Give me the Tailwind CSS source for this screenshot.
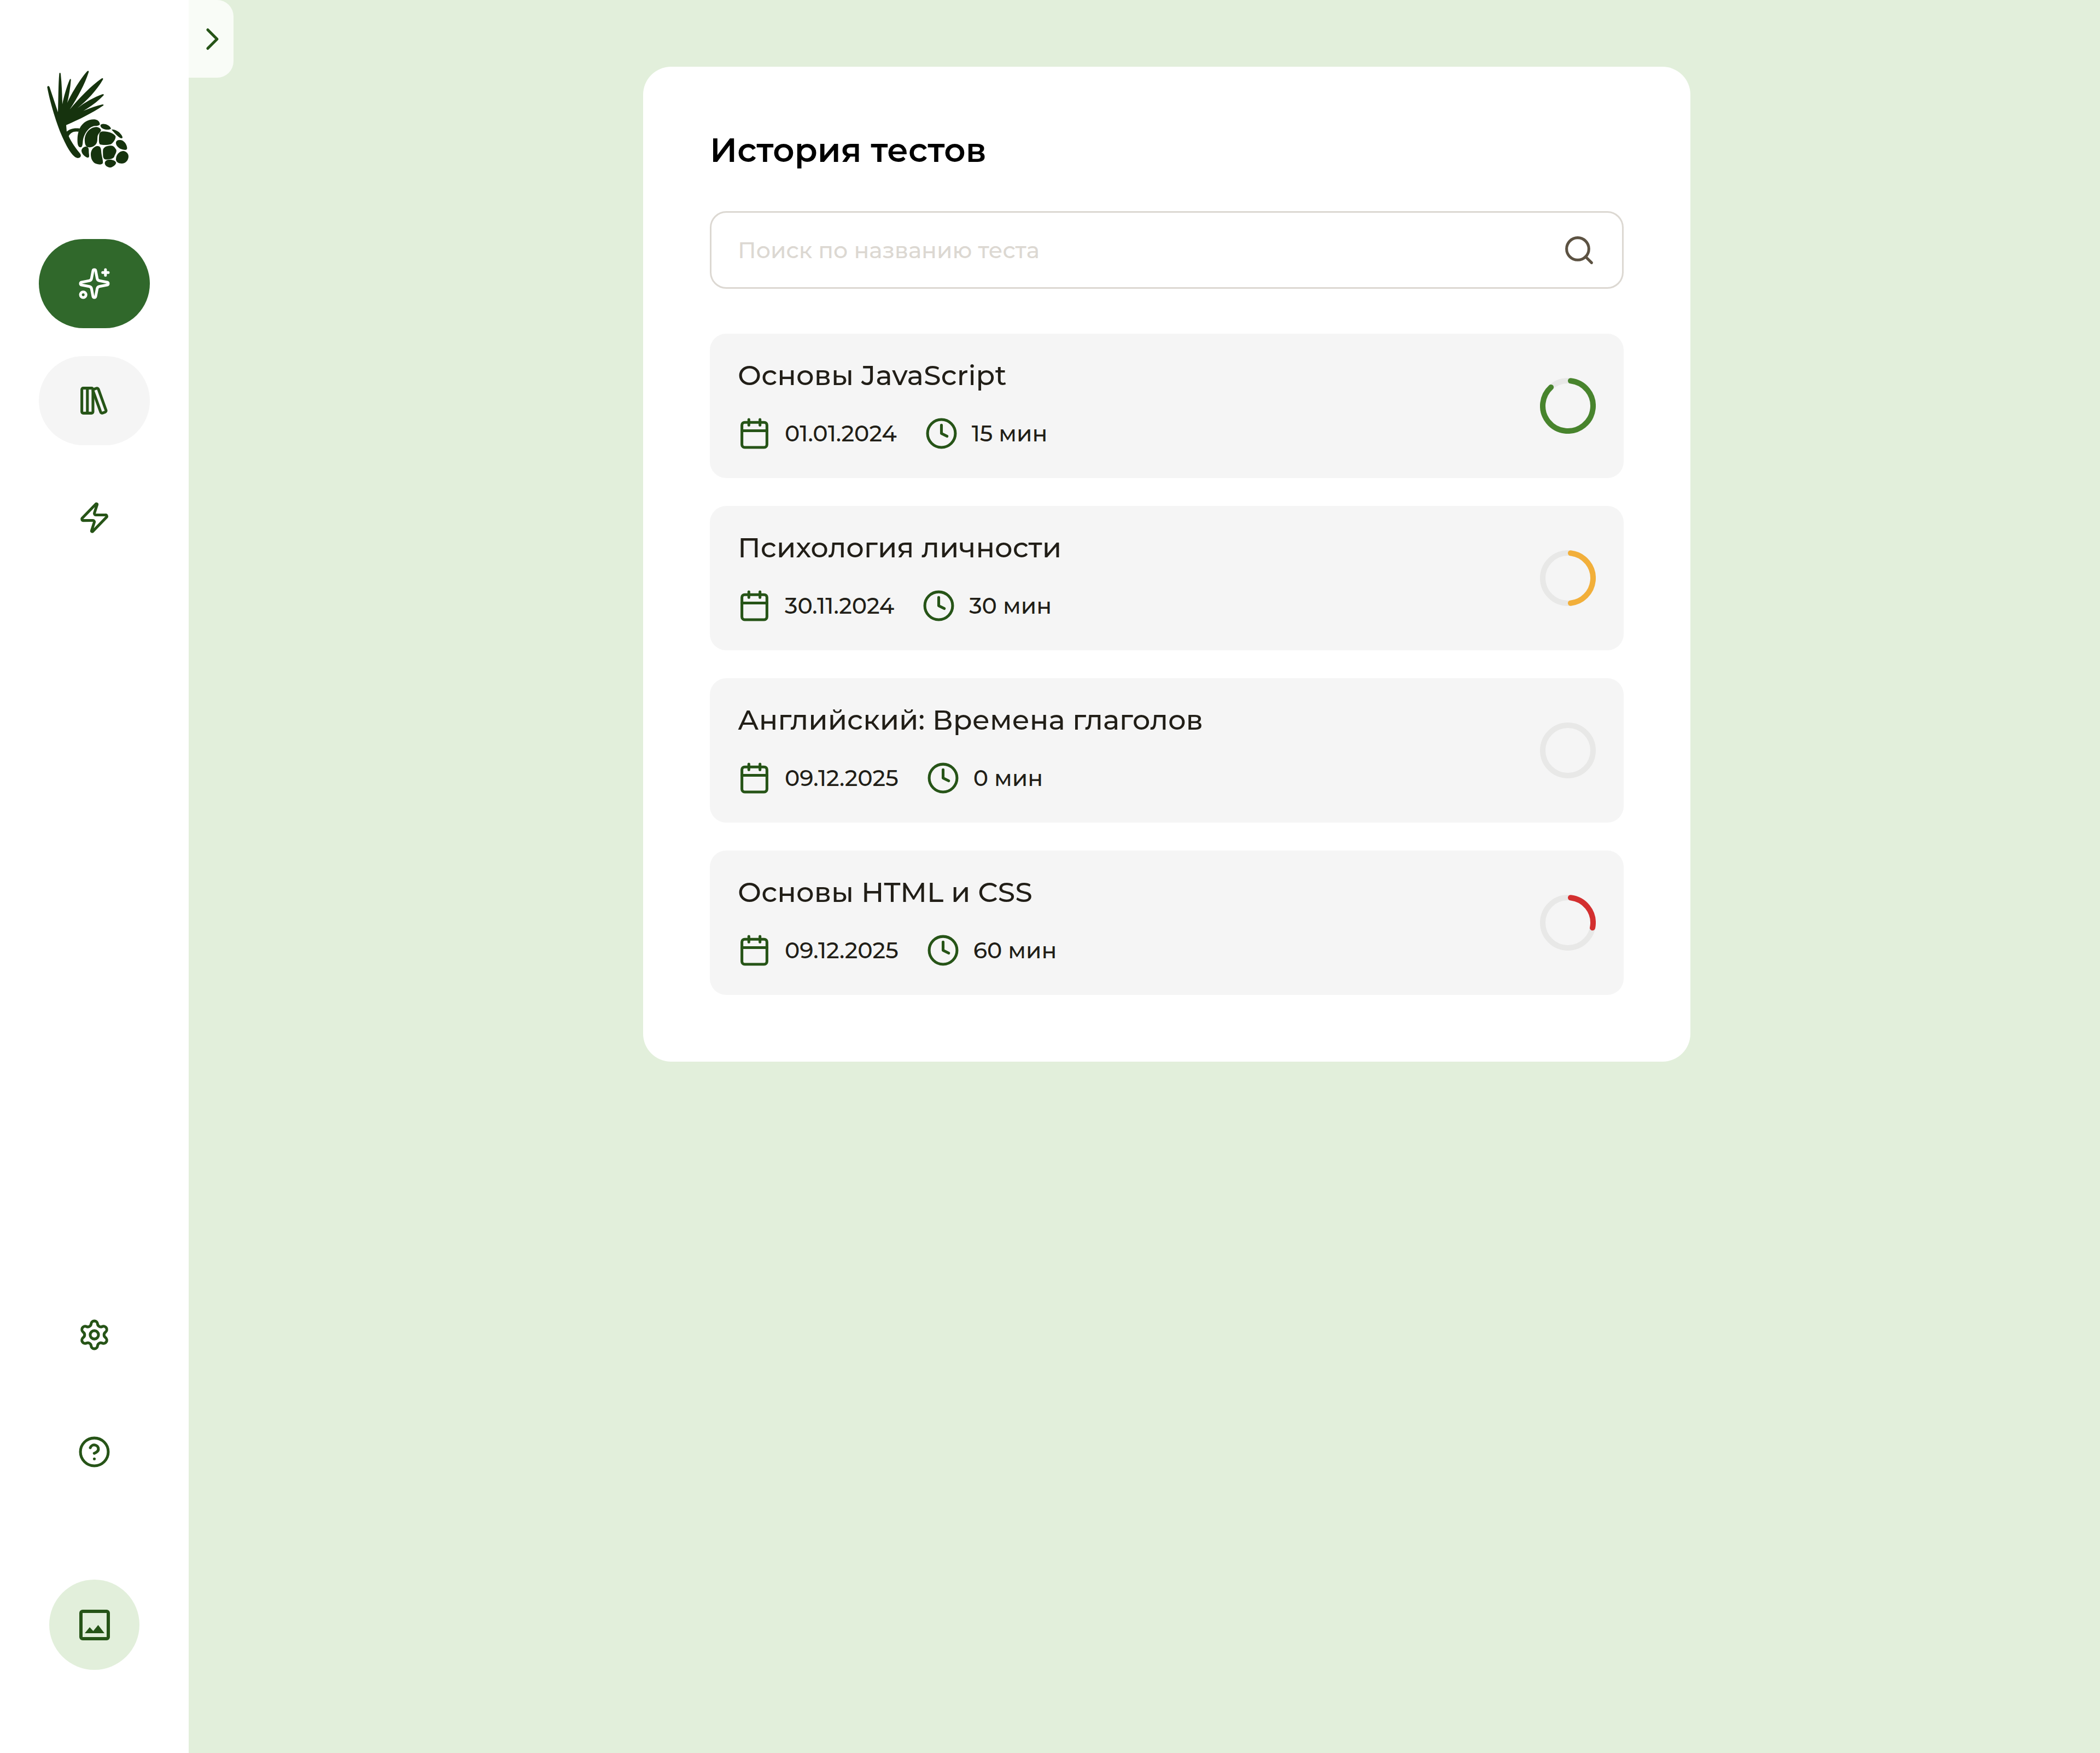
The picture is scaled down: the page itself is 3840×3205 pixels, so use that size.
<!DOCTYPE html>
<html lang="ru">

<head>
	<meta charset="UTF-8">
	<meta name="viewport" content="width=device-width, initial-scale=1.0">
	<title>История тестов</title>
	<script src="https://cdn.jsdelivr.net/npm/@tailwindcss/browser@4"></script>
</head>

<body class="flex min-h-screen bg-[#e2efdb] font-['Montserrat','Inter',sans-serif] text-[#211e17]">
	<!-- shared icons -->
	<svg class="hidden" xmlns="http://www.w3.org/2000/svg">
		<symbol id="calendar" viewBox="0 0 24 24">
			<path d="M8 2v4M16 2v4M3 10h18" />
			<rect x="3" y="4" width="18" height="18" rx="2" />
		</symbol>
		<symbol id="clock" viewBox="0 0 24 24">
			<circle cx="12" cy="12" r="10" />
			<path d="M12 6v6l4 2" />
		</symbol>
	</svg>

	<!-- sidebar -->
	<aside class="flex w-[345px] shrink-0 flex-col items-center bg-white pt-[110px] pb-[152px] text-[#265417]">
		<a href="#" aria-label="Главная">
			<svg class="h-[220px] w-[200px] fill-[#16330e]" viewBox="38 0 600 660">
				<!-- needles and twig -->
				<path d="M78 148C80 140 88 140 91 148L137 286C139 220 139 130 144 76C145 67 151 67 152 76C158 130 160 190 161 242C168 205 183 150 201 107C204 100 209 101 208 110C205 150 197 195 188 234C215 175 262 100 296 62C302 55 308 58 305 67C285 130 245 205 202 270C255 205 320 140 375 101C382 96 387 100 383 107C350 165 295 222 243 264C285 231 335 204 381 187C388 185 391 189 386 194C335 248 262 288 191 325C245 287 320 258 380 243C387 242 390 246 384 250C325 290 255 325 182 356L185 392C200 378 225 370 257 375L249 393C225 388 205 398 196 417C210 450 240 490 259 513C270 530 253 541 238 535C205 520 172 446 154 405C125 335 92 225 78 148Z" />
				<!-- cone scales -->
				<path d="M256 374C275 335 315 320 345 326C357 328 367 340 367 352C363 360 350 361 340 361C305 364 280 405 274 440C272 455 273 478 260 478C246 477 243 455 244 430C245 405 250 390 256 374Z" />
				<path d="M284 446C280 405 310 369 345 367C358 366 374 375 373 386C370 396 356 402 354 420C352 440 354 448 346 460C335 475 318 480 304 478C290 475 285 462 284 446Z" />
				<path d="M370 358C372 349 385 348 397 351C413 355 426 366 428 376C424 382 408 382 397 380C384 378 370 370 370 358Z" />
				<path d="M431 381C440 378 458 385 470 394C482 404 492 418 491 426C487 432 477 426 468 419C456 410 442 393 431 381Z" />
				<path d="M363 412C364 396 372 391 387 391C410 390 447 402 453 418C455 432 441 453 427 461C410 466 382 466 370 463C360 460 361 435 363 412Z" />
				<path d="M455 452C457 437 472 436 485 439C502 443 518 468 516 486C513 495 497 493 482 487C467 480 454 466 455 452Z" />
				<path d="M266 494C271 477 288 471 298 476C309 482 305 498 307 513C309 527 309 533 301 535C285 532 264 510 266 494Z" />
				<path d="M317 517C317 493 332 474 352 471C367 470 373 480 374 497C375 524 386 548 383 565C378 575 360 573 345 568C327 561 317 540 317 517Z" />
				<path d="M384 492C387 477 405 470 423 469C441 467 447 477 456 490C462 503 449 518 446 529C442 542 420 544 400 545C389 544 384 536 384 520C384 510 383 502 384 492Z" />
				<path d="M455 544C455 518 475 499 494 498C511 499 524 512 524 529C523 549 509 567 486 567C471 567 455 560 455 544Z" />
				<path d="M394 563C396 547 413 545 424 546C438 546 455 553 456 564C452 577 435 589 420 589C405 585 393 576 394 563Z" />
			</svg>
		</a>

		<nav class="mt-[107px] flex flex-col gap-[51px]">
			<a href="#" aria-label="Создать тест" class="flex h-[163px] w-[203px] items-center justify-center rounded-full bg-[#30682b] text-white">
				<svg class="size-[61px] fill-none stroke-current stroke-2" viewBox="0 0 24 24" stroke-linecap="round" stroke-linejoin="round">
					<path d="M11.017 2.814a1 1 0 0 1 1.966 0l1.051 5.558a2 2 0 0 0 1.594 1.594l5.558 1.051a1 1 0 0 1 0 1.966l-5.558 1.051a2 2 0 0 0-1.594 1.594l-1.051 5.558a1 1 0 0 1-1.966 0l-1.051-5.558a2 2 0 0 0-1.594-1.594l-5.558-1.051a1 1 0 0 1 0-1.966l5.558-1.051a2 2 0 0 0 1.594-1.594zM20 2v4M22 4h-4" />
					<circle cx="4" cy="20" r="2" />
				</svg>
			</a>
			<a href="#" aria-label="История тестов" aria-current="page" class="flex h-[163px] w-[203px] items-center justify-center rounded-full bg-[#f5f5f5]">
				<svg class="size-[61px] fill-none stroke-current stroke-2" viewBox="0 0 24 24" stroke-linecap="round" stroke-linejoin="round">
					<rect x="3" y="3" width="8" height="18" rx="1" />
					<path d="M7 3v18M20.4 18.9c.2.5-.1 1.1-.6 1.3l-1.9.7c-.5.2-1.1-.1-1.3-.6L11.1 5.1c-.2-.5.1-1.1.6-1.3l1.9-.7c.5-.2 1.1.1 1.3.6Z" />
				</svg>
			</a>
			<a href="#" aria-label="Быстрый тест" class="flex h-[163px] w-[203px] items-center justify-center rounded-full">
				<svg class="size-[61px] fill-none stroke-current stroke-2" viewBox="0 0 24 24" stroke-linecap="round" stroke-linejoin="round">
					<path d="M4 14a1 1 0 0 1-.78-1.63l9.9-10.2a.5.5 0 0 1 .86.46l-1.92 6.02A1 1 0 0 0 13 10h7a1 1 0 0 1 .78 1.63l-9.9 10.2a.5.5 0 0 1-.86-.46l1.92-6.02A1 1 0 0 0 11 14z" />
				</svg>
			</a>
		</nav>

		<div class="mt-auto flex flex-col items-center gap-[51px]">
			<a href="#" aria-label="Настройки" class="flex h-[163px] w-[203px] items-center justify-center rounded-full">
				<svg class="size-[61px] fill-none stroke-current stroke-2" viewBox="0 0 24 24" stroke-linecap="round" stroke-linejoin="round">
					<path d="M9.671 4.136a2.34 2.34 0 0 1 4.659 0 2.34 2.34 0 0 0 3.319 1.915 2.34 2.34 0 0 1 2.33 4.033 2.34 2.34 0 0 0 0 3.831 2.34 2.34 0 0 1-2.33 4.033 2.34 2.34 0 0 0-3.319 1.915 2.34 2.34 0 0 1-4.659 0 2.34 2.34 0 0 0-3.32-1.915 2.34 2.34 0 0 1-2.33-4.033 2.34 2.34 0 0 0 0-3.831A2.34 2.34 0 0 1 6.35 6.051a2.34 2.34 0 0 0 3.319-1.915" />
					<circle cx="12" cy="12" r="3" />
				</svg>
			</a>
			<a href="#" aria-label="Помощь" class="flex h-[163px] w-[203px] items-center justify-center rounded-full">
				<svg class="size-[61px] fill-none stroke-current stroke-2" viewBox="0 0 24 24" stroke-linecap="round" stroke-linejoin="round">
					<circle cx="12" cy="12" r="10" />
					<path d="M9.09 9a3 3 0 0 1 5.83 1c0 2-3 3-3 3M12 17h.01" />
				</svg>
			</a>
		</div>

		<button type="button" aria-label="Профиль" class="mt-[152px] flex size-[165px] items-center justify-center rounded-full bg-[#e2efdb]">
			<svg class="size-14" viewBox="0 0 56 56">
				<rect x="3" y="3" width="50" height="50" rx="3" fill="none" stroke="currentColor" stroke-width="6" />
				<path d="M10 43L19 32L25.500 39L34.500 28L46 43Z" fill="currentColor" />
			</svg>
		</button>
	</aside>

	<button type="button" aria-label="Развернуть меню" class="flex h-[142px] w-[82px] shrink-0 items-center justify-center rounded-r-[30px] bg-[#f9fcf7] text-[#265417]">
		<svg class="size-[61px] fill-none stroke-current stroke-2" viewBox="0 0 24 24" stroke-linecap="round" stroke-linejoin="round">
			<path d="M9.400 5.300L16.100 12L9.400 18.700" />
		</svg>
	</button>

	<!-- content -->
	<main class="flex grow items-start justify-center py-[122px]">
		<section class="w-full max-w-[1915px] rounded-[51px] bg-white p-[122px]">
			<h1 class="text-[61px] leading-[61px] font-semibold text-black">История тестов</h1>

			<form class="mt-[81px] flex h-[142px] items-center rounded-[30px] border-3 border-[#dcd8d2] px-12">
				<input type="search" aria-label="Поиск по названию теста" placeholder="Поиск по названию теста"
					class="h-full grow text-[41px] font-medium outline-none placeholder:text-[#dcd8d2]">
				<button type="submit" aria-label="Найти" class="text-[#5c5242]">
					<svg class="size-[61px] fill-none stroke-current stroke-2" viewBox="0 0 24 24" stroke-linecap="round">
						<circle cx="11" cy="11" r="8" />
						<path d="M21 21l-4.300-4.300" />
					</svg>
				</button>
			</form>

			<ul class="mt-[82px] flex flex-col gap-[51px]">
				<li class="flex items-center justify-between rounded-[30px] bg-[#f5f5f5] p-[51px]">
					<div class="flex flex-col gap-[50px]">
						<h2 class="text-[51px] leading-[51px] font-medium">Основы JavaScript</h2>
						<div class="flex gap-[51px] text-[41px] leading-[61px] font-medium">
							<span class="flex gap-[25px]"><svg class="size-[61px] fill-none stroke-[#265417] stroke-2" stroke-linecap="round" stroke-linejoin="round"><use href="#calendar" /></svg>01.01.2024</span>
							<span class="flex gap-[25px]"><svg class="size-[61px] fill-none stroke-[#265417] stroke-2" stroke-linecap="round" stroke-linejoin="round"><use href="#clock" /></svg>15 мин</span>
						</div>
					</div>
					<svg class="size-[102px] fill-none stroke-10" viewBox="0 0 102 102" role="img" aria-label="90%">
						<circle cx="51" cy="51" r="46" class="stroke-[#e8e8e7]" />
						<circle cx="51" cy="51" r="46" class="stroke-[#48842d]" pathLength="360" stroke-dasharray="311.6 360" stroke-linecap="round" transform="rotate(-83.8 51 51)" />
					</svg>
				</li>
				<li class="flex items-center justify-between rounded-[30px] bg-[#f5f5f5] p-[51px]">
					<div class="flex flex-col gap-[50px]">
						<h2 class="text-[51px] leading-[51px] font-medium">Психология личности</h2>
						<div class="flex gap-[51px] text-[41px] leading-[61px] font-medium">
							<span class="flex gap-[25px]"><svg class="size-[61px] fill-none stroke-[#265417] stroke-2" stroke-linecap="round" stroke-linejoin="round"><use href="#calendar" /></svg>30.11.2024</span>
							<span class="flex gap-[25px]"><svg class="size-[61px] fill-none stroke-[#265417] stroke-2" stroke-linecap="round" stroke-linejoin="round"><use href="#clock" /></svg>30 мин</span>
						</div>
					</div>
					<svg class="size-[102px] fill-none stroke-10" viewBox="0 0 102 102" role="img" aria-label="50%">
						<circle cx="51" cy="51" r="46" class="stroke-[#e8e8e7]" />
						<circle cx="51" cy="51" r="46" class="stroke-[#f2af3a]" pathLength="360" stroke-dasharray="167.6 360" stroke-linecap="round" transform="rotate(-83.8 51 51)" />
					</svg>
				</li>
				<li class="flex items-center justify-between rounded-[30px] bg-[#f5f5f5] p-[51px]">
					<div class="flex flex-col gap-[50px]">
						<h2 class="text-[51px] leading-[51px] font-medium">Английский: Времена глаголов</h2>
						<div class="flex gap-[51px] text-[41px] leading-[61px] font-medium">
							<span class="flex gap-[25px]"><svg class="size-[61px] fill-none stroke-[#265417] stroke-2" stroke-linecap="round" stroke-linejoin="round"><use href="#calendar" /></svg>09.12.2025</span>
							<span class="flex gap-[25px]"><svg class="size-[61px] fill-none stroke-[#265417] stroke-2" stroke-linecap="round" stroke-linejoin="round"><use href="#clock" /></svg>0 мин</span>
						</div>
					</div>
					<svg class="size-[102px] fill-none stroke-10" viewBox="0 0 102 102" role="img" aria-label="0%">
						<circle cx="51" cy="51" r="46" class="stroke-[#e8e8e7]" />
					</svg>
				</li>
				<li class="flex items-center justify-between rounded-[30px] bg-[#f5f5f5] p-[51px]">
					<div class="flex flex-col gap-[50px]">
						<h2 class="text-[51px] leading-[51px] font-medium">Основы HTML и CSS</h2>
						<div class="flex gap-[51px] text-[41px] leading-[61px] font-medium">
							<span class="flex gap-[25px]"><svg class="size-[61px] fill-none stroke-[#265417] stroke-2" stroke-linecap="round" stroke-linejoin="round"><use href="#calendar" /></svg>09.12.2025</span>
							<span class="flex gap-[25px]"><svg class="size-[61px] fill-none stroke-[#265417] stroke-2" stroke-linecap="round" stroke-linejoin="round"><use href="#clock" /></svg>60 мин</span>
						</div>
					</div>
					<svg class="size-[102px] fill-none stroke-10" viewBox="0 0 102 102" role="img" aria-label="30%">
						<circle cx="51" cy="51" r="46" class="stroke-[#e8e8e7]" />
						<circle cx="51" cy="51" r="46" class="stroke-[#d32f2f]" pathLength="360" stroke-dasharray="95.6 360" stroke-linecap="round" transform="rotate(-83.8 51 51)" />
					</svg>
				</li>
			</ul>
		</section>
	</main>
</body>

</html>
